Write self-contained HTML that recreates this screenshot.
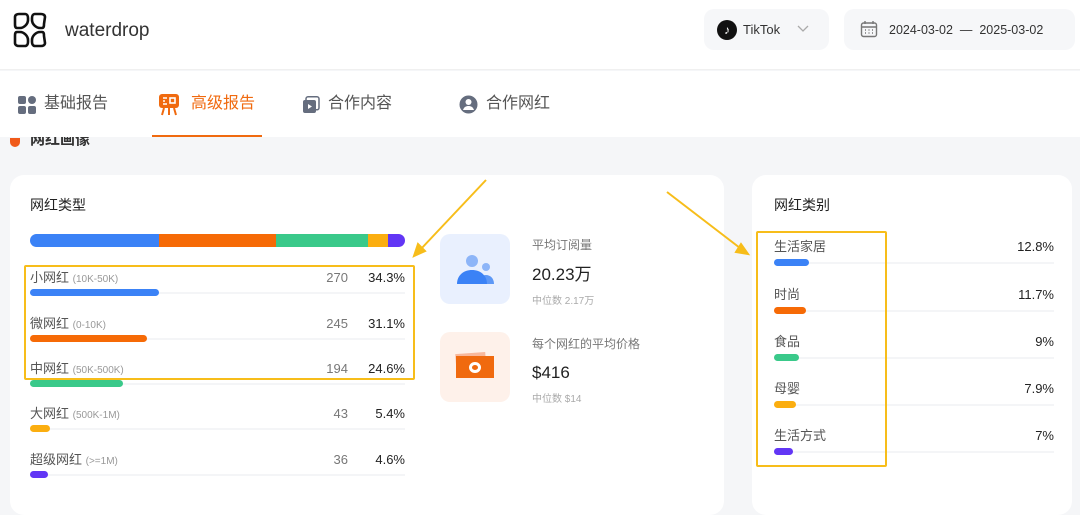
<!DOCTYPE html><html><head><meta charset="utf-8"><style>
*{margin:0;padding:0;box-sizing:border-box}
body{width:1080px;height:499px;overflow:hidden;background:#f5f6f8;font-family:"Liberation Sans","Noto Sans CJK SC",sans-serif;position:relative;color:#333}
.a{position:absolute}
.hdr{left:0;top:0;width:1080px;height:70px;background:#fff;border-bottom:1px solid #f0f0f0}
.nav{left:0;top:71px;width:1080px;height:66px;background:#fff}
.card{background:#fff;border-radius:14px}
.t{font-size:14px;color:#222}
.lab{font-size:13px;color:#555;line-height:16px}
.lab small{font-size:10px;color:#999}
.num{font-size:13px;color:#777;text-align:right;width:40px;line-height:16px}
.pct{font-size:13px;color:#222;text-align:right;width:50px;line-height:16px}
.bar{height:7px;border-radius:4px}
.track{height:2px;background:#f4f5f7}
.box{border:2.5px solid #f7bd1a;border-radius:2px}
.nv{font-size:16px;line-height:20px}
</style></head><body>
<div class="a hdr"></div>
<svg class="a" style="left:12px;top:12px" width="36" height="36" viewBox="0 0 36 36" fill="none" stroke="#111" stroke-width="2.6"><path d="M3 5c0-2 2-3 4-3h6c2 0 3 2 3 4v2c0 4-4 8-8 8H5c-2 0-2-2-2-4z"/><path d="M33 5c0-2-2-3-4-3h-6c-2 0-3 2-3 4v2c0 4 4 8 8 8h2c2 0 2-2 2-4z"/><path d="M3 31c0 2 2 3 4 3h6c2 0 3-2 3-4v-2c0-4-4-8-8-8H5c-2 0-2 2-2 4z"/><path d="M33 31c0 2-2 3-4 3h-6c-2 0-3-2-3-4v-2c0-4 4-8 8-8h2c2 0 2 2 2 4z"/></svg>
<div class="a" style="left:65px;top:20px;font-size:19px;color:#333">waterdrop</div>
<div class="a" style="left:704px;top:9px;width:125px;height:41px;background:#f6f7f9;border-radius:10px"></div>
<div class="a" style="left:717px;top:20px;width:20px;height:20px;border-radius:50%;background:#111;color:#fff;font-size:12px;text-align:center;line-height:20px">♪</div>
<div class="a" style="left:743px;top:22px;font-size:13px;color:#333">TikTok</div>
<svg class="a" style="left:797px;top:25px" width="12" height="8" viewBox="0 0 12 8" fill="none" stroke="#aaa" stroke-width="1.3"><path d="M1 1l5 5 5-5"/></svg>
<div class="a" style="left:844px;top:9px;width:231px;height:41px;background:#f6f7f9;border-radius:10px"></div>
<svg class="a" style="left:860px;top:20px" width="18" height="18" viewBox="0 0 18 18" fill="none" stroke="#777" stroke-width="1.4"><rect x="1.5" y="3" width="15" height="13.5" rx="2"/><path d="M1.5 7h15M5 1v3M13 1v3M5 10h1M8.5 10h1M12 10h1M5 13h1M8.5 13h1M12 13h1"/></svg>
<div class="a" style="left:889px;top:23px;font-size:12.5px;color:#333">2024-03-02 &nbsp;— &nbsp;2025-03-02</div>
<div class="a nav"></div>
<svg class="a" style="left:18px;top:96px" width="18" height="18" viewBox="0 0 18 18" fill="#656d7e"><rect x="0" y="0" width="8" height="8" rx="2"/><circle cx="14" cy="4" r="4"/><rect x="0" y="10" width="8" height="8" rx="2"/><rect x="10" y="10" width="8" height="8" rx="2"/></svg>
<div class="a nv" style="left:44px;top:94px;color:#555">基础报告</div>
<svg class="a" style="left:158px;top:93px" width="22" height="24" viewBox="0 0 22 24"><rect x="1" y="1" width="20" height="14" rx="3" fill="#f06a0f"/><path d="M5 5h4M5 8h2M5 11h4" stroke="#fff" stroke-width="1.6"/><rect x="12" y="5" width="5" height="5" fill="none" stroke="#fff" stroke-width="1.6"/><path d="M6 15l-2 7M11 15v7M16 15l2 7" stroke="#f06a0f" stroke-width="2"/></svg>
<div class="a nv" style="left:191px;top:94px;color:#f06a0f">高级报告</div>
<div class="a" style="left:152px;top:135px;width:110px;height:2px;background:#f06a0f"></div>
<svg class="a" style="left:302px;top:96px" width="18" height="18" viewBox="0 0 18 18"><rect x="4" y="0.8" width="13" height="13" rx="2" fill="none" stroke="#656d7e" stroke-width="1.5"/><rect x="1" y="4" width="13" height="13" rx="2" fill="#656d7e"/><path d="M6 8v5l4-2.5z" fill="#fff"/></svg>
<div class="a nv" style="left:328px;top:94px;color:#555">合作内容</div>
<svg class="a" style="left:459px;top:95px" width="19" height="19" viewBox="0 0 19 19"><circle cx="9.5" cy="9.5" r="9" fill="#656d7e"/><circle cx="9.5" cy="7" r="3" fill="#fff"/><path d="M4 15c1-3 3-4 5.5-4s4.5 1 5.5 4" fill="#fff"/></svg>
<div class="a nv" style="left:486px;top:94px;color:#555">合作网红</div>
<div class="a" style="left:10px;top:138px;width:10px;height:9px;background:#f05a1a;border-radius:0 0 5px 5px"></div>
<div class="a" style="left:30px;top:137px;font-size:15px;color:#333;height:14px;overflow:hidden;line-height:20px"><span style="position:relative;top:-7px;font-weight:bold">网红画像</span></div>
<div class="a card" style="left:10px;top:175px;width:714px;height:340px"></div>
<div class="a card" style="left:752px;top:175px;width:320px;height:340px"></div>
<div class="a t" style="left:30px;top:195px">网红类型</div>
<div class="a" style="left:30px;top:234px;width:375px;height:13px;border-radius:7px;overflow:hidden;display:flex"><div style="width:129px;background:#3b82f6"></div><div style="width:117px;background:#f66a06"></div><div style="width:92px;background:#3ac98a"></div><div style="width:20px;background:#fbae10"></div><div style="flex:1;background:#6236f5"></div></div>
<div class="a lab" style="left:30px;top:270px">小网红 <small>(10K-50K)</small></div><div class="a num" style="left:308px;top:270px">270</div><div class="a pct" style="left:355px;top:270px">34.3%</div>
<div class="a track" style="left:30px;top:292px;width:375px"></div><div class="a bar" style="left:30px;top:289px;width:129px;background:#3b82f6"></div>
<div class="a lab" style="left:30px;top:316px">微网红 <small>(0-10K)</small></div><div class="a num" style="left:308px;top:316px">245</div><div class="a pct" style="left:355px;top:316px">31.1%</div>
<div class="a track" style="left:30px;top:338px;width:375px"></div><div class="a bar" style="left:30px;top:335px;width:117px;background:#f66a06"></div>
<div class="a lab" style="left:30px;top:361px">中网红 <small>(50K-500K)</small></div><div class="a num" style="left:308px;top:361px">194</div><div class="a pct" style="left:355px;top:361px">24.6%</div>
<div class="a track" style="left:30px;top:383px;width:375px"></div><div class="a bar" style="left:30px;top:380px;width:93px;background:#3ac98a"></div>
<div class="a lab" style="left:30px;top:406px">大网红 <small>(500K-1M)</small></div><div class="a num" style="left:308px;top:406px">43</div><div class="a pct" style="left:355px;top:406px">5.4%</div>
<div class="a track" style="left:30px;top:428px;width:375px"></div><div class="a bar" style="left:30px;top:425px;width:20px;background:#fbae10"></div>
<div class="a lab" style="left:30px;top:452px">超级网红 <small>(&gt;=1M)</small></div><div class="a num" style="left:308px;top:452px">36</div><div class="a pct" style="left:355px;top:452px">4.6%</div>
<div class="a track" style="left:30px;top:474px;width:375px"></div><div class="a bar" style="left:30px;top:471px;width:18px;background:#6236f5"></div>
<div class="a box" style="left:24px;top:265px;width:391px;height:115px"></div>
<div class="a" style="left:440px;top:234px;width:70px;height:70px;border-radius:10px;background:#e9f0fe"></div>
<svg class="a" style="left:454px;top:250px" width="42" height="36" viewBox="0 0 42 36"><circle cx="32" cy="17" r="4" fill="#8db5f8"/><path d="M24 34c0-6 4-9 8-9s8 3 8 9z" fill="#5d98f6"/><circle cx="18" cy="11" r="6" fill="#8db5f8"/><path d="M3 34c0-9 7-14 15-14s15 5 15 14z" fill="#3b82f6"/></svg>
<div class="a" style="left:532px;top:236px;font-size:12px;color:#777">平均订阅量</div>
<div class="a" style="left:532px;top:264px;font-size:17px;color:#222;line-height:22px">20.23万</div>
<div class="a" style="left:532px;top:292px;font-size:10px;color:#aaa">中位数 2.17万</div>
<div class="a" style="left:440px;top:332px;width:70px;height:70px;border-radius:10px;background:#fef1ea"></div>
<div class="a" style="left:456px;top:353px;width:30px;height:22px;background:#f8b89c;transform:rotate(-4deg)"></div>
<div class="a" style="left:456px;top:356px;width:38px;height:22px;background:#f06a0f"></div>
<div class="a" style="left:469px;top:362px;width:12px;height:11px;border-radius:50%;border:3px solid #fff"></div>
<div class="a" style="left:532px;top:335px;font-size:12px;color:#777">每个网红的平均价格</div>
<div class="a" style="left:532px;top:362px;font-size:17px;color:#222;line-height:22px">$416</div>
<div class="a" style="left:532px;top:390px;font-size:10px;color:#aaa">中位数 $14</div>
<div class="a t" style="left:774px;top:195px">网红类别</div>
<div class="a lab" style="left:774px;top:239px">生活家居</div><div class="a pct" style="left:1004px;top:239px">12.8%</div>
<div class="a track" style="left:774px;top:262px;width:280px"></div><div class="a bar" style="left:774px;top:259px;width:35px;background:#3b82f6"></div>
<div class="a lab" style="left:774px;top:287px">时尚</div><div class="a pct" style="left:1004px;top:287px">11.7%</div>
<div class="a track" style="left:774px;top:310px;width:280px"></div><div class="a bar" style="left:774px;top:307px;width:32px;background:#f66a06"></div>
<div class="a lab" style="left:774px;top:334px">食品</div><div class="a pct" style="left:1004px;top:334px">9%</div>
<div class="a track" style="left:774px;top:357px;width:280px"></div><div class="a bar" style="left:774px;top:354px;width:25px;background:#3ac98a"></div>
<div class="a lab" style="left:774px;top:381px">母婴</div><div class="a pct" style="left:1004px;top:381px">7.9%</div>
<div class="a track" style="left:774px;top:404px;width:280px"></div><div class="a bar" style="left:774px;top:401px;width:22px;background:#fbae10"></div>
<div class="a lab" style="left:774px;top:428px">生活方式</div><div class="a pct" style="left:1004px;top:428px">7%</div>
<div class="a track" style="left:774px;top:451px;width:280px"></div><div class="a bar" style="left:774px;top:448px;width:19px;background:#6236f5"></div>
<div class="a box" style="left:756px;top:231px;width:131px;height:236px"></div>
<svg class="a" style="left:0;top:0" width="1080" height="499"><g stroke="#f7bd1a" stroke-width="2" fill="#f7bd1a"><line x1="486" y1="180" x2="420" y2="250"/><path d="M414 256l4-12 7 7z"/><line x1="667" y1="192" x2="740" y2="248"/><path d="M748 254l-12-2 5-8z"/></g></svg>
</body></html>
